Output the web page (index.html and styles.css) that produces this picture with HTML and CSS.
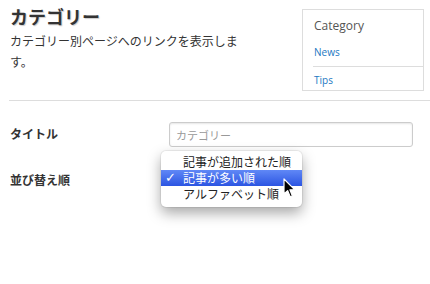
FILE: index.html
```html
<!DOCTYPE html>
<html lang="ja">
<head>
    <meta charset="UTF-8">
    <meta name="viewport" content="width=device-width, initial-scale=1.0">
    <title>カテゴリー</title>
    <link rel="stylesheet" href="styles.css">
</head>
<body>
    <div class="header">
        <div class="intro">
            <h1>カテゴリー</h1>
            <p>カテゴリー別ページへのリンクを表示します。</p>
        </div>
        <div class="widget">
            <h2>Category</h2>
            <ul>
                <li><a href="#">News</a></li>
                <li><a href="#">Tips</a></li>
            </ul>
        </div>
    </div>

    <hr class="rule">

    <form class="settings">
        <div class="row">
            <label>タイトル</label>
            <input type="text" placeholder="カテゴリー">
        </div>
        <div class="row">
            <label>並び替え順</label>
            <div class="picker">
                <ul class="menu">
                    <li>記事が追加された順</li>
                    <li class="selected"><span class="check">✓</span>記事が多い順</li>
                    <li>アルファベット順</li>
                </ul>
                <svg class="cursor" width="13" height="21" viewBox="0 0 13 21">
                    <path d="M1 1 L1 16 L4.6 12.6 L7.2 18.8 L9.4 17.9 L6.9 11.8 L11.8 11.8 Z" fill="#000" stroke="#fff" stroke-width="1.2" stroke-linejoin="round"/>
                </svg>
            </div>
        </div>
    </form>
</body>
</html>
```

FILE: styles.css
```css
html, body {
    min-height: 284px;
}
body {
    margin: 0;
    font-family: "Noto Sans CJK JP", "Noto Sans", sans-serif;
    color: #333;
    background: #fff;
}
.header {
    display: flex;
    justify-content: space-between;
    padding: 0 6px 0 10px;
    height: 100px;
}
.intro {
    width: 235px;
}
h1 {
    margin: 5px 0 0;
    font-size: 18px;
    line-height: 22px;
    font-weight: bold;
    text-shadow: 1px 1px 1px rgba(0, 0, 0, 0.2);
}
.intro p {
    margin: 3px 0 0;
    font-size: 12px;
    line-height: 21px;
}
.widget {
    margin-top: 9px;
    width: 120px;
    height: 80px;
    border: 1px solid #ddd;
    font-family: "Open Sans", sans-serif;
}
.widget h2 {
    margin: 6px 0 0 11px;
    font-size: 12px;
    line-height: 20px;
    font-weight: normal;
    color: #555;
}
.widget ul {
    list-style: none;
    margin: 2px 0 0 10px;
    padding: 0;
}
.widget li {
    font-size: 10px;
    line-height: 14px;
    padding: 7px 0 7px 1px;
}
.widget li:first-child {
    border-bottom: 1px solid #ddd;
}
.widget li:last-child {
    padding-top: 6px;
}
.widget a {
    color: #2478c2;
    text-decoration: none;
}
.rule {
    margin: 0 0 0 9px;
    border: 0;
    border-top: 1px solid #ddd;
}
.settings {
    padding: 0 0 80px 10px;
}
.row {
    display: grid;
    grid-template-columns: 159px 244px;
    align-items: center;
    height: 25px;
    margin-top: 21px;
}
.row label {
    font-size: 12px;
    font-weight: bold;
    margin-top: -2px;
}
.row input {
    box-sizing: border-box;
    height: 25px;
    padding: 0 6px;
    border: 1px solid #ccc;
    border-radius: 3px;
    box-shadow: inset 0 1px 2px rgba(0, 0, 0, 0.1);
    font-family: inherit;
    font-size: 11px;
}
.row input::placeholder {
    color: #999;
}
.picker {
    position: relative;
    height: 25px;
}
.menu {
    position: absolute;
    left: -8px;
    top: -17px;
    width: 141px;
    margin: 0;
    padding: 3px 0 5px;
    list-style: none;
    background: #fff;
    border-radius: 5px;
    box-shadow: 0 0 0 1px rgba(0, 0, 0, 0.06), 0 6px 14px rgba(0, 0, 0, 0.35);
}
.menu li {
    position: relative;
    height: 16px;
    line-height: 16px;
    padding-left: 22px;
    font-size: 12px;
    color: #222;
}
.menu li.selected {
    background: linear-gradient(#6088f6, #2c55e2);
    color: #fff;
}
.check {
    position: absolute;
    left: 4px;
    font-family: "DejaVu Sans", sans-serif;
    font-size: 13px;
    font-weight: bold;
}
.cursor {
    position: absolute;
    left: 114px;
    top: 10px;
}
```
